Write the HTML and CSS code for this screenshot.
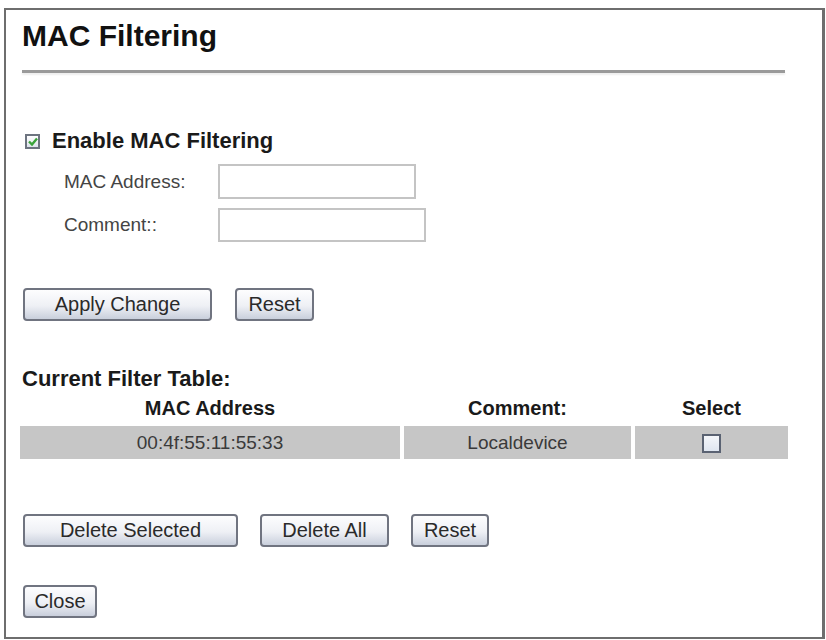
FILE: index.html
```html
<!DOCTYPE html>
<html>
<head>
    <title>MAC Filtering</title>
    <link rel="stylesheet" href="styles.css">
</head>
<body>
    <div class="panel">
        <h1>MAC Filtering</h1>
        <hr class="rule">

        <div class="enable-row">
            <span class="check checked">
                <svg width="10" height="9" viewBox="0 0 10 9"><path d="M1 4.5 L4 7.5 L9 1.5" fill="none" stroke="#3aa33a" stroke-width="2.4"/></svg>
            </span>
            <span class="enable-label">Enable MAC Filtering</span>
        </div>

        <div class="form-row">
            <label class="field-label">MAC Address:</label>
            <input class="field mac" type="text">
        </div>
        <div class="form-row">
            <label class="field-label">Comment::</label>
            <input class="field comment" type="text">
        </div>

        <div class="button-row apply-row">
            <button class="btn w-apply">Apply Change</button>
            <button class="btn w-reset">Reset</button>
        </div>

        <div class="table-title">Current Filter Table:</div>
        <table class="filter-table">
            <thead>
                <tr>
                    <th class="col-mac">MAC Address</th>
                    <th class="col-comment">Comment:</th>
                    <th class="col-select">Select</th>
                </tr>
            </thead>
            <tbody>
                <tr>
                    <td>00:4f:55:11:55:33</td>
                    <td>Localdevice</td>
                    <td><span class="check select-box"></span></td>
                </tr>
            </tbody>
        </table>

        <div class="button-row delete-row">
            <button class="btn w-delsel">Delete Selected</button>
            <button class="btn w-delall">Delete All</button>
            <button class="btn w-reset2">Reset</button>
        </div>

        <div class="button-row close-row">
            <button class="btn w-close">Close</button>
        </div>
    </div>
</body>
</html>
```

FILE: styles.css
```css
body {
    margin: 0;
    background: #fff;
    font-family: "Liberation Sans", Arial, sans-serif;
    color: #333;
}

.panel {
    box-sizing: border-box;
    margin: 8px 1px 0 4px;
    height: 631px;
    border: 2px solid #6e6e6e;
    border-right-width: 3px;
    padding: 9px 0 0 16px;
}

h1 {
    margin: 0;
    font-size: 30px;
    line-height: 34px;
    font-weight: bold;
    color: #111;
}

.rule {
    margin: 17px 37px 0 0;
    border: 0;
    height: 3px;
    background: #9a9a9a;
    box-shadow: 0 2px 2px #eee;
}

.enable-row {
    display: flex;
    align-items: center;
    height: 24px;
    margin-top: 56px;
}

.check {
    box-sizing: border-box;
    display: inline-flex;
    align-items: center;
    justify-content: center;
    width: 15px;
    height: 15px;
    border: 2px solid #6d7480;
    background: linear-gradient(#ffffff, #dde3ec);
}

.checked {
    margin-left: 3px;
}

.enable-label {
    margin-left: 12px;
    font-size: 22px;
    font-weight: bold;
    color: #1a1a1a;
}

.form-row {
    display: flex;
    align-items: center;
    margin-top: 9px;
}

.enable-row + .form-row {
    margin-top: 11px;
}

.field-label {
    width: 154px;
    margin-left: 42px;
    font-size: 19px;
    color: #444;
}

.field {
    box-sizing: border-box;
    height: 35px;
    border: 2px solid #c4c4c4;
    background: #fff;
    margin: 0;
}

.mac { width: 198px; }
.comment { width: 208px; height: 34px; }

.button-row {
    display: flex;
    gap: 22px;
}

.apply-row { margin-top: 46px; }
.delete-row { margin-top: 51px; }
.close-row { margin-top: 38px; }

.btn {
    box-sizing: border-box;
    height: 33px;
    margin-left: 1px;
    padding: 0;
    border: 2px solid #707480;
    border-radius: 4px;
    background: linear-gradient(#fdfdfe, #eef0f5 55%, #c9cfdc);
    font-family: "Liberation Sans", Arial, sans-serif;
    font-size: 20px;
    color: #2a2a2a;
}

.w-apply { width: 189px; }
.w-reset { width: 79px; }
.w-delsel { width: 215px; }
.w-delall { width: 129px; margin-left: 0; }
.w-reset2 { width: 78px; margin-left: 0; }
.w-close { width: 74px; }

.table-title {
    margin-top: 46px;
    font-size: 22px;
    line-height: 24px;
    font-weight: bold;
    color: #1a1a1a;
}

.filter-table {
    margin-left: -6px;
    border-spacing: 4px;
}

.filter-table th {
    height: 27px;
    padding: 0;
    font-size: 20px;
    font-weight: bold;
    color: #1a1a1a;
}

.col-mac { width: 380px; }
.col-comment { width: 227px; }
.col-select { width: 153px; }

.filter-table td {
    height: 33px;
    padding: 0;
    background: #c6c6c6;
    text-align: center;
    font-size: 19px;
    color: #3a3a3a;
}

.select-box {
    width: 19px;
    height: 19px;
    vertical-align: middle;
    border-color: #5a6272;
    background: linear-gradient(#f4f6fa, #dfe6f0);
}
```
